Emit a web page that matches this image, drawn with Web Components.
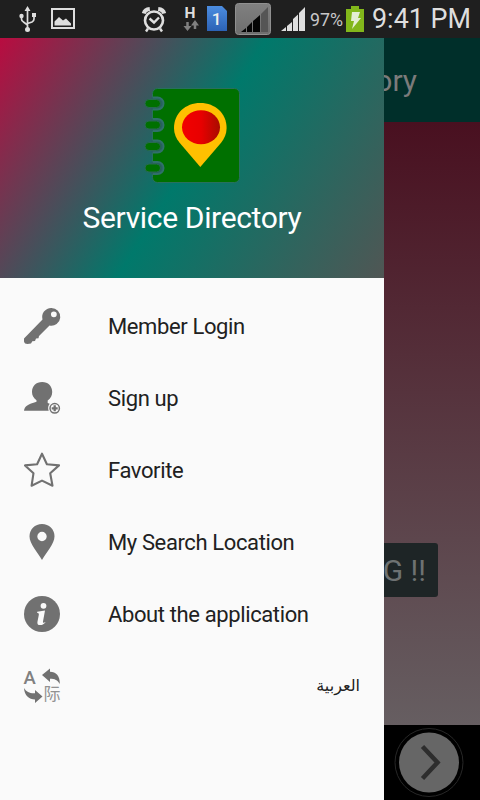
<!DOCTYPE html>
<html lang="en">
<head>
<meta charset="utf-8">
<title>Service Directory</title>
<style>
  body {
    margin: 0;
    width: 480px;
    height: 800px;
    overflow: hidden;
    font-family: Roboto, "Noto Sans", sans-serif;
  }
</style>
</head>
<body>
<service-app></service-app>

<script>
const icons = {
  key: `<path fill="#717171" fill-rule="evenodd" d="M27.200 0a8.900 8.900 0 1 1-1.700 17.600L15 28l-.5 2.200-2.500.3-1 2.500-2.700.2-1.300 2.200-3.500.6Q.500 36 0 33.500V30.500L18.500 11.500A9 9 0 0 1 27.200 0zM29.800 3.400a2.900 2.900 0 1 0 .1 5.800 2.900 2.900 0 0 0-.1-5.800z"/>`,
  signup: `<path fill="#717171" d="M18.200 2c6 0 10 4 10 10 0 3.500-1.500 6.500-4.500 8.500v2.500l2 .8a7 7 0 0 0-1 7H0c.5-4.500 4-6.500 12.500-9v-1.500C9.500 18 8 15.500 8 12 8 6 12 2 18.200 2z"/><circle cx="30.700" cy="28.300" r="4.700" fill="none" stroke="#717171" stroke-width="1.500"/><path d="M30.700 25.300v6M27.700 28.300h6" stroke="#717171" stroke-width="2.300"/>`,
  star: `<path d="M18 1.700l4.900 10.500 12.100 1.200-8.800 7.800 2.300 12.500L18 28.600 7.600 33.700l1.900-12.500L1 13.400l12.100-1.200z" fill="none" stroke="#717171" stroke-width="2.100" stroke-linejoin="round"/>`,
  pin: `<path fill="#717171" fill-rule="evenodd" d="M18 0c7 0 12.500 5.300 12.500 12.300C30.500 20 22.500 28 18 36 13.500 28 5.500 20 5.500 12.300 5.500 5.300 11 0 18 0zm0 7.800a4.700 4.700 0 1 0 0 9.400 4.700 4.700 0 0 0 0-9.400z"/>`,
  info: `<circle cx="18" cy="18" r="18" fill="#717171"/><circle cx="19.500" cy="9.800" r="2.900" fill="#fafafa"/><path d="M13.200 15.700l7.800-1.200-2 11c-.3 1.600.5 1.500 2.700.5-1.500 2.200-3.500 3.200-5.700 3.100-2.200-.1-3-1.500-2.500-3.700l1.300-6.400c.3-1.400-.3-1.900-1.600-1.900z" fill="#fafafa"/>`,
  language: `<text x="-.5" y="15.500" font-size="18.500" font-weight="500" fill="#808080" font-family="Roboto, sans-serif">A</text><text x="19.500" y="32.300" font-size="17" fill="#929292" font-family="'Noto Sans CJK SC', sans-serif">际</text><g fill="#717171"><path d="M18 7l8-6.500v3.300c6 0 10 4 9.800 12.200-2.200-4-5-5.300-9.800-5.300V14z"/><path d="M18.500 28.500l-7.500 6.500V31.500C5 31.500 .500 27.500 0 20c2.500 4.200 6 5.500 11 5.200V22z"/></g>`
};

class StatusBar extends HTMLElement {
  constructor() {
    super();
    this.attachShadow({ mode: "open" });
  }

  static get styles() {
    return /* css */`
      :host {
        display: block;
        height: 38px;
        background: #1f1f1f;
      }

      svg {
        display: block;
      }
    `;
  }

  connectedCallback() {
    this.shadowRoot.innerHTML = /* html */`
    <style>${StatusBar.styles}</style>
    <svg width="480" height="38" viewBox="0 0 480 38">
      <g fill="none" stroke="#dedede" stroke-width="1.700">
        <path d="M27.500 9v20M21.500 16v3q0 2 2 3l4 3M34 15v4q0 2-2 3l-4.500 1.500"/>
        <rect x="52" y="9" width="22" height="19" stroke-width="2"/>
        <circle cx="154" cy="20.500" r="9" stroke-width="2.600"/>
        <path d="M149.500 18.500l4.500 4 5-5M148 28.500l-2 3M160 28.500l2 3" stroke-width="2.400"/>
        <path d="M143.800 13.500q1-4 6-4.500M164.200 13.500q-1-4-6-4.500" stroke-width="4"/>
      </g>
      <g fill="#dedede">
        <path d="M27.500 6l3 5h-6zM32 13h4v4h-4z"/>
        <circle cx="21.500" cy="16" r="2.200"/>
        <circle cx="27.500" cy="29.500" r="2.500"/>
        <path d="M54.500 25.500v-4l4.500-4.500 4 3.500 3-2 5 5v2z"/>
        <path d="M281 31l5-4v4zM287 31v-5l5-4v9zM293 31V19l5-4.500V31zM299 31V13l6-6v24z"/>
      </g>
      <text x="184.500" y="17.500" font-size="15.500" font-weight="700" fill="#dedede">H</text>
      <path d="M187.500 22v7M195 29v-7" stroke="#808080" stroke-width="2.500"/>
      <path d="M183.500 26h8l-4 5zM191 25.500h8l-4-5.500z" fill="#808080"/>
      <defs>
        <linearGradient id="sim" x1="0" y1="0" x2="0" y2="1">
          <stop offset="0" stop-color="#4c8de0"/>
          <stop offset="1" stop-color="#2c62b5"/>
        </linearGradient>
        <linearGradient id="tile" x1="0" y1="0" x2="0" y2="1">
          <stop offset="0" stop-color="#808080"/>
          <stop offset="1" stop-color="#6e6e6e"/>
        </linearGradient>
      </defs>
      <path d="M207 6h15l5 5v20h-20z" fill="url(#sim)"/>
      <text x="211.800" y="24.500" font-size="17" font-weight="500" fill="#eee">1</text>
      <rect x="235.500" y="3.500" width="35" height="31" rx="3" fill="url(#tile)" stroke="#909090"/>
      <path d="M241 32l5-4v4zM247 32v-5l5-5v10zM253 32V21l7-6v17z" fill="#050505"/>
      <path d="M261 32V14l7-7v25z" fill="#555"/>
      <text x="310" y="26" font-size="19" fill="#c8c8c8" textLength="33" lengthAdjust="spacingAndGlyphs">97%</text>
      <path d="M351 6h8v3h5v23h-18V9h5z" fill="#82b71b"/>
      <path d="M352 12h8l-2 6h3l-9 11 2-8h-3z" fill="#e4eed3"/>
      <text x="372" y="28" font-size="27" fill="#dedede" textLength="99" lengthAdjust="spacingAndGlyphs">9:41 PM</text>
    </svg>`;
  }
}

class HomeScreen extends HTMLElement {
  constructor() {
    super();
    this.attachShadow({ mode: "open" });
  }

  static get styles() {
    return /* css */`
      :host {
        display: flex;
        flex-direction: column;
        align-items: stretch;
        background: #000;
        color: #7b7b7b;
      }

      .toolbar {
        height: 84px;
        box-sizing: border-box;
        padding: 2px 63px 0 0;
        background: #002f2a;
        font-size: 30px;
        line-height: 82px;
        text-align: right;
      }

      .content {
        height: 603px;
        box-sizing: border-box;
        padding: 421px 42px 0 0;
        background: linear-gradient(#491020, #665e61);
      }

      .banner {
        margin-left: 340px;
        height: 54px;
        padding-right: 12px;
        border-radius: 3px;
        background: #1e2526;
        color: #6e7272;
        font-size: 30px;
        line-height: 55px;
        text-align: right;
      }

      .footer {
        flex: 1;
        display: flex;
        justify-content: flex-end;
        align-items: center;
        padding-right: 16px;
      }

      svg {
        display: block;
      }
    `;
  }

  connectedCallback() {
    this.shadowRoot.innerHTML = /* html */`
    <style>${HomeScreen.styles}</style>
    <div class="toolbar"><slot></slot></div>
    <div class="content">
      <div class="banner">G !!</div>
    </div>
    <div class="footer">
      <svg width="70" height="70" viewBox="0 0 70 70">
        <circle cx="35" cy="34.500" r="34" fill="none" stroke="#272727"/>
        <circle cx="35" cy="34.500" r="30" fill="#666"/>
        <path d="M28.500 18.500L43.500 34.500 28.500 50.500" fill="none" stroke="#2d2d2d" stroke-width="4.500"/>
      </svg>
    </div>`;
  }
}

class NavHeader extends HTMLElement {
  constructor() {
    super();
    this.attachShadow({ mode: "open" });
  }

  static get styles() {
    return /* css */`
      :host {
        display: flex;
        flex-direction: column;
        align-items: center;
        height: 240px;
        box-sizing: border-box;
        padding-top: 48px;
        background: linear-gradient(122deg, #b90c40, #00796b 50%, #505654);
        color: #fff;
      }

      .title {
        margin-top: 16px;
        font-size: 30px;
        line-height: 36px;
        letter-spacing: -0.35px;
        white-space: nowrap;
      }

      svg {
        display: block;
      }
    `;
  }

  connectedCallback() {
    this.shadowRoot.innerHTML = /* html */`
    <style>${NavHeader.styles}</style>
    <svg width="96" height="98" viewBox="0 0 96 98">
      <defs>
        <linearGradient id="dot">
          <stop offset="0" stop-color="#f20000"/>
          <stop offset=".5" stop-color="#e80000"/>
          <stop offset="1" stop-color="#a80c00"/>
        </linearGradient>
      </defs>
      <rect x="8.500" y="2.500" width="87" height="94" rx="5" fill="#007000" stroke="#28705c"/>
      <g id="rings"></g>
      <path d="M56.300 17c15 0 26.300 10.500 26.300 25 0 6-2.200 10.500-5.500 14.800L56.300 81 35.600 56.800C32.200 52.500 30 48 30 42c0-14.500 11.300-25 26.300-25z" fill="#ffc000"/>
      <ellipse cx="57" cy="41.200" rx="19" ry="17" fill="url(#dot)"/>
    </svg>
    <div class="title"><slot></slot></div>`;

    const rings = [17.500, 39, 60.500, 82];
    this.shadowRoot.getElementById("rings").innerHTML = rings.map(y => `
      <path d="M7 ${y - 6}H13a6 6 0 0 1 0 12H7z" fill="#285f60"/>
      <path d="M9 ${y - 6}h4.500a6 6 0 0 1 0 12H9" fill="none" stroke="#30706a" stroke-width="2"/>
      <rect x="1" y="${y - 4}" width="15.500" height="8" rx="4" fill="#007000" stroke="#286a50"/>`).join("");
  }
}

class NavItem extends HTMLElement {
  constructor() {
    super();
    this.attachShadow({ mode: "open" });
  }

  static get styles() {
    return /* css */`
      :host {
        display: flex;
        align-items: center;
        height: 72px;
        box-sizing: border-box;
        padding: 0 24px;
        gap: 48px;
        color: #212121;
        font-size: 22px;
      }

      .label {
        flex: 1;
        padding-top: 1px;
        line-height: 28px;
        letter-spacing: -0.38px;
        white-space: nowrap;
      }

      :host([lang="ar"]) .label {
        direction: rtl;
        font-family: "DejaVu Sans", sans-serif;
        font-size: 16px;
        letter-spacing: 0;
        padding-top: 0;
      }

      svg {
        display: block;
        overflow: visible;
      }
    `;
  }

  connectedCallback() {
    this.shadowRoot.innerHTML = /* html */`
    <style>${NavItem.styles}</style>
    <svg width="36" height="36" viewBox="0 0 36 36">${icons[this.getAttribute("icon")]}</svg>
    <div class="label"><slot></slot></div>`;
  }
}

class NavDrawer extends HTMLElement {
  constructor() {
    super();
    this.attachShadow({ mode: "open" });
  }

  static get styles() {
    return /* css */`
      :host {
        display: block;
        width: 384px;
        background: #fafafa;
      }

      .menu {
        padding-top: 12px;
      }
    `;
  }

  connectedCallback() {
    this.shadowRoot.innerHTML = /* html */`
    <style>${NavDrawer.styles}</style>
    <slot name="header"></slot>
    <div class="menu"><slot></slot></div>`;
  }
}

class ServiceApp extends HTMLElement {
  constructor() {
    super();
    this.attachShadow({ mode: "open" });
  }

  static get styles() {
    return /* css */`
      :host {
        display: grid;
        grid-template-rows: 38px 762px;
        width: 480px;
      }

      home-screen,
      nav-drawer {
        grid-area: 2 / 1;
      }
    `;
  }

  connectedCallback() {
    this.shadowRoot.innerHTML = /* html */`
    <style>${ServiceApp.styles}</style>
    <status-bar></status-bar>
    <home-screen>Service Directory</home-screen>
    <nav-drawer>
      <nav-header slot="header">Service Directory</nav-header>
      <nav-item icon="key">Member Login</nav-item>
      <nav-item icon="signup">Sign up</nav-item>
      <nav-item icon="star">Favorite</nav-item>
      <nav-item icon="pin">My Search Location</nav-item>
      <nav-item icon="info">About the application</nav-item>
      <nav-item icon="language" lang="ar">العربية</nav-item>
    </nav-drawer>`;
  }
}

customElements.define("status-bar", StatusBar);
customElements.define("home-screen", HomeScreen);
customElements.define("nav-header", NavHeader);
customElements.define("nav-item", NavItem);
customElements.define("nav-drawer", NavDrawer);
customElements.define("service-app", ServiceApp);
</script>
</body>
</html>
